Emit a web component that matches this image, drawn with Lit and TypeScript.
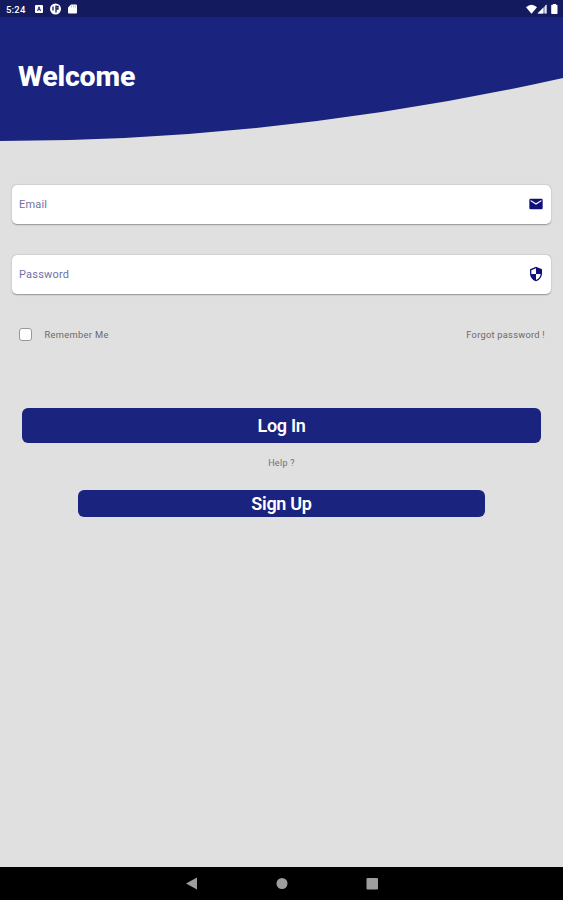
import { LitElement, html, css, svg } from "lit";
import { customElement, property } from "lit/decorators.js";

const glyphs = {
  mail: svg`<path d="M20 4H4c-1.100 0-2 .9-2 2v12c0 1.100.9 2 2 2h16c1.100 0 2-.9 2-2V6c0-1.100-.9-2-2-2zm0 4-8 5-8-5V6l8 5 8-5z"/>`,
  shield: svg`<path d="M12 1 3 5v6c0 5.550 3.840 10.740 9 12 5.160-1.260 9-6.450 9-12V5zm0 10.990h7c-.53 4.120-3.280 7.790-7 8.940V12H5V6.300l7-3.110z"/>`,
};

@customElement("input-card")
class InputCard extends LitElement {
  @property() label = "";
  @property() icon: keyof typeof glyphs = "mail";

  static styles = css`
    :host {
      display: flex;
      align-items: center;
      justify-content: space-between;
      box-sizing: border-box;
      height: 39px;
      padding: 0 7.5px 0 7px;
      background: #fff;
      border-radius: 5px;
      box-shadow: 0 0.5px 1.5px rgba(0, 0, 0, 0.35);
    }
    .label {
      font-size: 11px;
      letter-spacing: 0.2px;
      color: #6f70a3;
    }
    .icon {
      width: 16px;
      height: 16px;
      margin-bottom: 1px;
      fill: #10107a;
    }
  `;

  render() {
    return html`
      <span class="label">${this.label}</span>
      <svg class="icon" viewBox="0 0 24 24">${glyphs[this.icon]}</svg>
    `;
  }
}

@customElement("app-root")
class AppRoot extends LitElement {
  static styles = css`
    :host {
      display: flex;
      flex-direction: column;
      height: 900px;
      overflow: hidden;
      background: #e0e0e0;
      font-family: Roboto, sans-serif;
    }
    .header {
      display: grid;
      height: 142px;
      flex: none;
    }
    .header > * {
      grid-area: 1 / 1;
    }
    .curve {
      width: 100%;
      height: 142px;
      fill: #1a237e;
    }
    .status {
      display: flex;
      align-items: center;
      justify-content: space-between;
      align-self: start;
      box-sizing: border-box;
      height: 17px;
      padding: 1px 4px 0 6px;
      background: #141a5e;
      color: #fff;
      font-size: 9.5px;
      font-weight: 500;
    }
    .left {
      display: flex;
      align-items: center;
    }
    .time {
      width: 28px;
      letter-spacing: 0.2px;
    }
    .left-icons {
      width: 46px;
      height: 12px;
    }
    .right-icons {
      width: 34px;
      height: 12px;
    }
    .title {
      margin: 60px 0 0 18px;
      font-size: 28.5px;
      line-height: 34px;
      font-weight: 800;
      letter-spacing: -0.2px;
      color: #fff;
    }
    .form {
      display: flex;
      flex-direction: column;
      flex: 1;
      padding: 43px 12px 0;
    }
    .password {
      margin-top: 31px;
    }
    .options {
      display: flex;
      align-items: center;
      height: 14px;
      margin-top: 33px;
      padding: 0 6px 0 6.5px;
      font-size: 9.3px;
      letter-spacing: 0.33px;
      color: #6a6a6a;
    }
    .box {
      box-sizing: border-box;
      width: 13px;
      height: 13px;
      border: 1.5px solid #999;
      border-radius: 3px;
      background: #fff;
      margin-right: 13px;
    }
    .forgot {
      margin-left: auto;
      letter-spacing: 0.25px;
    }
    .button {
      display: flex;
      align-items: center;
      justify-content: center;
      border: 0;
      padding: 0;
      border-radius: 6px;
      background: #1a237e;
      color: #fff;
      font: 600 18px Roboto, sans-serif;
      letter-spacing: -0.3px;
    }
    .login {
      height: 35px;
      margin: 67px 10px 0;
    }
    .help {
      margin-top: 13px;
      height: 14px;
      line-height: 14px;
      text-align: center;
      font-size: 9px;
      letter-spacing: 0.3px;
      color: #707070;
    }
    .signup {
      height: 27px;
      margin: 20px 66px 0;
    }
    .nav {
      display: flex;
      align-items: center;
      justify-content: center;
      flex: none;
      height: 33px;
      background: #000;
    }
    .nav-icons {
      width: 194px;
      height: 14px;
      fill: #9e9e9e;
    }
  `;

  render() {
    return html`
      <header class="header">
        <svg class="curve" viewBox="0 0 563 142" preserveAspectRatio="none">
          <path d="M0 0H563V78Q281.5 141 0 141Z" />
        </svg>
        <div class="status">
          <div class="left">
            <span class="time">5:24</span>
            <svg class="left-icons" viewBox="0 0 46 12">
              <rect x="1" y="2" width="8" height="8" rx="1" fill="#fff" />
              <path d="M3.500 8 5 3.800 6.600 8M4 6.600h2" fill="none" stroke="#141a5e" stroke-width=".9" />
              <circle cx="21.500" cy="6" r="5.500" fill="#fff" />
              <path d="M19 3.500v4M22 2.500v7M22 3.500h2v2.500h-2" fill="none" stroke="#141a5e" stroke-width="1.300" />
              <path d="M37 1.500h5a1 1 0 0 1 1 1v7a1 1 0 0 1-1 1h-7a1 1 0 0 1-1-1v-5z" fill="#fff" />
              <path d="M37.500 2.500v2M39.500 2.500v2M41.300 2.500v2" stroke="#8a8ebb" stroke-width=".6" />
            </svg>
          </div>
          <svg class="right-icons" viewBox="0 0 34 12">
            <path d="M1 4.200Q6.500-.8 12 4.200L6.500 10.700Z" fill="#fff" />
            <path d="M12.500 10.500 21.500 1.500v9z" fill="#a7aacb" />
            <path d="M12.500 10.500 18 5v5.500zM20.300 2.700l1.200-1.200v9h-1.200z" fill="#fff" />
            <path d="M27 1.800h1V1h3v.8h.7a.8.8 0 0 1 .8.8v7.600a.8.800 0 0 1-.8.800h-4.700a.8.800 0 0 1-.8-.8V2.600a.8.800 0 0 1 .8-.8z" fill="#fff" />
          </svg>
        </div>
        <h1 class="title">Welcome</h1>
      </header>
      <main class="form">
        <input-card label="Email" icon="mail"></input-card>
        <input-card class="password" label="Password" icon="shield"></input-card>
        <div class="options">
          <span class="box"></span>
          <span>Remember Me</span>
          <span class="forgot">Forgot password !</span>
        </div>
        <button class="button login">Log In</button>
        <div class="help">Help ?</div>
        <button class="button signup">Sign Up</button>
      </main>
      <nav class="nav">
        <svg class="nav-icons" viewBox="0 0 194 14">
          <path d="M1 6.500 12 .5v12z" />
          <circle cx="97" cy="6.500" r="5.500" />
          <rect x="181.500" y="1" width="11.500" height="11.500" rx="1" />
        </svg>
      </nav>
    `;
  }
}
